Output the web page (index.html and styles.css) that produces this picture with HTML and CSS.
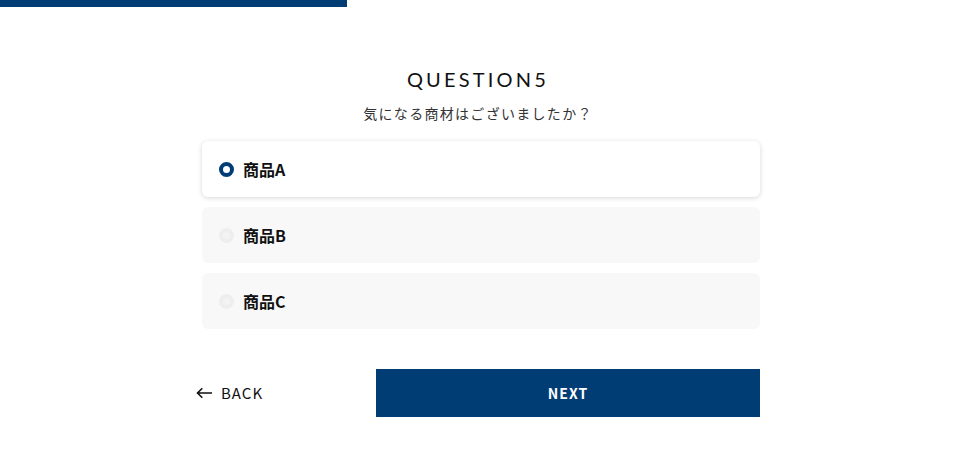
FILE: index.html
```html
<!DOCTYPE html>
<html lang="ja">
<head>
<meta charset="utf-8">
<link rel="stylesheet" href="styles.css">
</head>
<body>
<div class="progress"><div class="progress-bar"></div></div>
<main class="quiz">
  <h1 class="q-title">QUESTION5</h1>
  <p class="q-text">気になる商材はございましたか？</p>
  <ul class="options">
    <li class="option active"><span class="radio"></span><span class="label">商品A</span></li>
    <li class="option"><span class="radio"></span><span class="label">商品B</span></li>
    <li class="option"><span class="radio"></span><span class="label">商品C</span></li>
  </ul>
  <div class="nav">
    <a class="back" href="#"><svg class="arrow" width="16" height="12" viewBox="0 0 16 12"><path d="M16 6H1.5M6.3 1.2L1.5 6l4.8 4.8" fill="none" stroke="#111" stroke-width="1.6"/></svg><span>BACK</span></a>
    <button class="next">NEXT</button>
  </div>
</main>
</body>
</html>
```
FILE: styles.css
```css
* { box-sizing: border-box; }
html, body { margin: 0; padding: 0; background: #fff; }
body { font-family: "Noto Sans CJK JP", "Noto Sans", sans-serif; color: #111; }
.progress { height: 7px; width: 100%; }
.progress-bar { height: 7px; width: 347px; background: #003d75; }
.quiz { width: 558px; margin: 0 0 0 202px; display: flex; flex-direction: column; }
.q-title { margin: 60px 0 0; text-align: center; font-family: "Lato", sans-serif; font-weight: 400; font-size: 20px; line-height: 24px; letter-spacing: 3.2px; color: #111; padding-right: 6px; }
.q-text { margin: 12px 0 0; text-align: center; font-size: 14px; line-height: 20px; letter-spacing: 1.3px; color: #333; padding-right: 6px; }
.options { list-style: none; margin: 18px 0 0; padding: 0; display: flex; flex-direction: column; gap: 10px; }
.option { height: 56px; border-radius: 6px; background: #f8f8f8; display: flex; align-items: center; padding-left: 17px; gap: 9px; }
.option.active { background: #fff; box-shadow: 0 1px 5px rgba(0,0,0,0.16); }
.radio { width: 15px; height: 15px; border-radius: 50%; border: 4px solid #eeeeee; background: #f3f3f3; }
.option.active .radio { border-color: #003d75; background: #fff; }
.label { font-weight: 700; font-size: 16px; line-height: 20px; color: #111; }
.nav { display: flex; align-items: center; margin-top: 40px; }
.back { width: 180px; margin-left: -6px; display: flex; align-items: center; gap: 9px; text-decoration: none; color: #111; font-size: 15px; letter-spacing: 1px; }
.back span { line-height: 20px; }
.next { flex: 1; height: 48px; border: 0; background: #003d75; color: #fff; font-family: "Noto Sans CJK JP", "Noto Sans", sans-serif; font-weight: 700; font-size: 14px; letter-spacing: 1px; }
```
